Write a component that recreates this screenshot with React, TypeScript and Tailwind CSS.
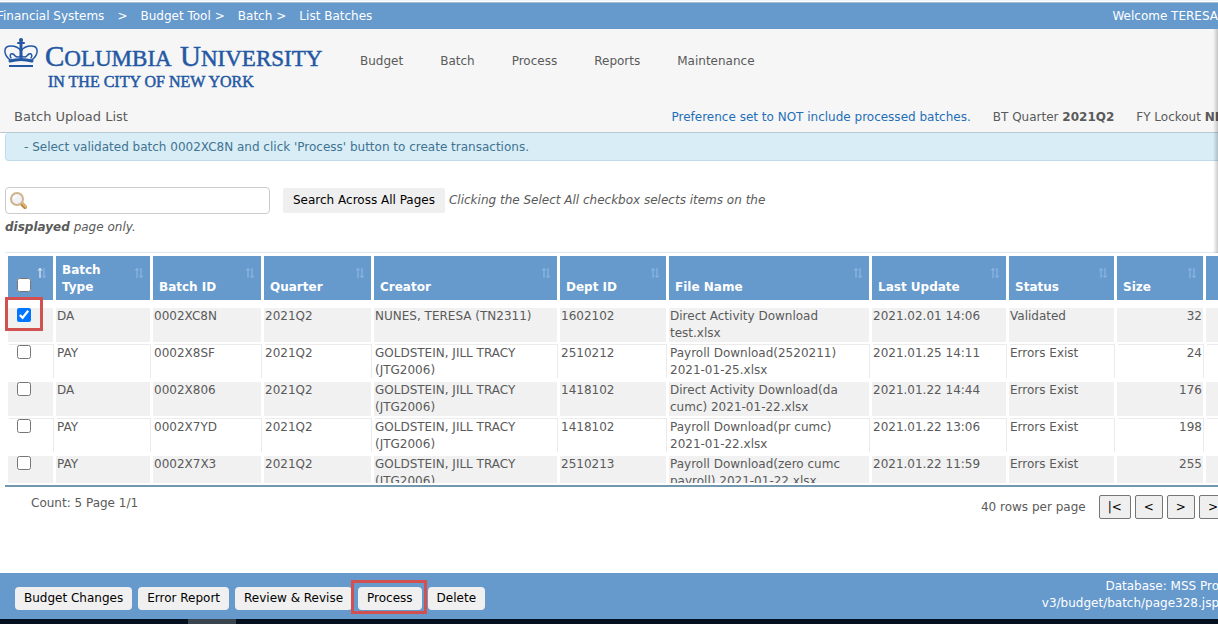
import { useState } from "react";

interface Batch {
  id: string;
  type: string;
  quarter: string;
  creator: string;
  dept: string;
  file: string;
  updated: string;
  status: string;
  size: number;
}

const BATCHES: Batch[] = [
  {
    id: "0002XC8N",
    type: "DA",
    quarter: "2021Q2",
    creator: "NUNES, TERESA (TN2311)",
    dept: "1602102",
    file: "Direct Activity Download test.xlsx",
    updated: "2021.02.01 14:06",
    status: "Validated",
    size: 32,
  },
  {
    id: "0002X8SF",
    type: "PAY",
    quarter: "2021Q2",
    creator: "GOLDSTEIN, JILL TRACY (JTG2006)",
    dept: "2510212",
    file: "Payroll Download(2520211) 2021-01-25.xlsx",
    updated: "2021.01.25 14:11",
    status: "Errors Exist",
    size: 24,
  },
  {
    id: "0002X806",
    type: "DA",
    quarter: "2021Q2",
    creator: "GOLDSTEIN, JILL TRACY (JTG2006)",
    dept: "1418102",
    file: "Direct Activity Download(da cumc) 2021-01-22.xlsx",
    updated: "2021.01.22 14:44",
    status: "Errors Exist",
    size: 176,
  },
  {
    id: "0002X7YD",
    type: "PAY",
    quarter: "2021Q2",
    creator: "GOLDSTEIN, JILL TRACY (JTG2006)",
    dept: "1418102",
    file: "Payroll Download(pr cumc) 2021-01-22.xlsx",
    updated: "2021.01.22 13:06",
    status: "Errors Exist",
    size: 198,
  },
  {
    id: "0002X7X3",
    type: "PAY",
    quarter: "2021Q2",
    creator: "GOLDSTEIN, JILL TRACY (JTG2006)",
    dept: "2510213",
    file: "Payroll Download(zero cumc payroll) 2021-01-22.xlsx",
    updated: "2021.01.22 11:59",
    status: "Errors Exist",
    size: 255,
  },
];

const COLUMNS = [
  { title: "Batch Type", width: "w-[94px]" },
  { title: "Batch ID", width: "w-[108px]" },
  { title: "Quarter", width: "w-[107px]" },
  { title: "Creator", width: "w-[183px]" },
  { title: "Dept ID", width: "w-[106px]" },
  { title: "File Name", width: "w-[200px]" },
  { title: "Last Update", width: "w-[134px]" },
  { title: "Status", width: "w-[105px]" },
  { title: "Size", width: "w-[86px]" },
];

const CRUMBS = ["Financial Systems", "Budget Tool", "Batch", "List Batches"];
const MENU = ["Budget", "Batch", "Process", "Reports", "Maintenance"];
const TH =
  "relative h-[49px] border-b-[5px] border-transparent bg-[#6699cc] bg-clip-padding px-[6px] pt-[6px] pb-[4px] text-left align-bottom font-bold text-white";

function Logo() {
  return (
    <svg width="326" height="54" viewBox="0 0 326 54" role="img" aria-label="Columbia University">
      <g fill="none" stroke="#2458a4" strokeWidth="1.5" strokeLinecap="round" strokeLinejoin="round">
        <path d="M10 23C3 17 3 9 11 9c5 0 8 2 10 5 2-3 5-5 10-5 8 0 8 8 1 14" />
        <path d="M11 21c-2-3 0-5 2-4s2 3 5 3 3-2 3-5c0 3 0 5 3 5s3-2 5-3 4 1 2 4" />
        <path d="M21 3v18" strokeWidth="3" />
        <path d="M18 6h6" strokeWidth="2" />
        <path d="M10 24c7-2 15-2 22 0" strokeWidth="3" />
        <path d="M9 29h24" strokeWidth="2" strokeLinecap="butt" />
      </g>
      <circle cx="21" cy="3" r="2" fill="#2458a4" />
      <g
        fill="#2458a4"
        stroke="#2458a4"
        strokeWidth="0.5"
        fontFamily="'Liberation Serif', serif"
      >
        <text x="45" y="29" fontSize="23">
          <tspan fontSize="29">C</tspan>OLUMBIA
        </text>
        <text x="180" y="29" fontSize="23">
          <tspan fontSize="29">U</tspan>NIVERSITY
        </text>
        <text x="48" y="50" fontSize="16">
          IN THE CITY OF NEW YORK
        </text>
      </g>
    </svg>
  );
}

function SortIcon({ active = false }: { active?: boolean }) {
  return (
    <svg
      className="absolute top-[11px] right-[6px]"
      width="10"
      height="12"
      viewBox="0 0 10 12"
      fill="none"
      stroke="#94bce6"
      aria-hidden="true"
    >
      <path d="M3 11V1.500M1 3.500l2-2 2 2" stroke={active ? "#ffffff" : "#94bce6"} />
      <path d="M7 1v9.500M5 8.500l2 2 2-2" />
    </svg>
  );
}

function SearchIcon() {
  return (
    <svg width="18" height="18" viewBox="0 0 18 18" aria-hidden="true">
      <path d="M12 12l3 3" stroke="#b98a4a" strokeWidth="4" strokeLinecap="round" />
      <path d="M12 11l4 4" stroke="#e9c078" strokeWidth="1.500" strokeLinecap="round" />
      <circle cx="7" cy="7" r="6" fill="#f1f1f7" stroke="#cdb48c" strokeWidth="2" />
      <path d="M4 7a3 3 0 0 1 3-3" fill="none" stroke="#ffffff" strokeWidth="1.500" />
    </svg>
  );
}

function Highlight({ className }: { className: string }) {
  return (
    <span className={`pointer-events-none absolute border-3 border-[#d2504f] ${className}`} />
  );
}

function ActionButton({ label }: { label: string }) {
  return (
    <button type="button" className="h-[23px] rounded bg-[#f0f0f0] px-[9px] text-black">
      {label}
    </button>
  );
}

export default function App() {
  const [selected, setSelected] = useState<string[]>(["0002XC8N"]);
  const [query, setQuery] = useState("");

  function toggle(id: string) {
    setSelected((prev) => (prev.includes(id) ? prev.filter((x) => x !== id) : [...prev, id]));
  }

  function toggleAll() {
    setSelected((prev) => (prev.length === BATCHES.length ? [] : BATCHES.map((b) => b.id)));
  }

  return (
    <div className="relative flex min-h-screen flex-col overflow-hidden bg-white font-['DejaVu_Sans',sans-serif] text-xs leading-[17px] text-[#5a5a5a]">
      <div className="h-[3px] border-t border-b border-t-[#eef4f8] border-b-[#a5bccd] bg-white" />
      <div className="flex h-[26px] items-center justify-between overflow-hidden bg-[#6699cc] whitespace-nowrap text-white">
        <nav className="-ml-[3px] flex" aria-label="Breadcrumb">
          {CRUMBS.map((c, i) => (
            <span key={c} className="flex">
              <a href="#">{c}</a>
              {i < CRUMBS.length - 1 && (
                <span className={i === 0 ? "mx-[13px]" : "mr-[13px] ml-[4px]"}>&gt;</span>
              )}
            </span>
          ))}
        </nav>
        <span>Welcome TERESA</span>
      </div>

      <header className="overflow-hidden border-b border-[#b9c9d3] bg-[#f6f6f6] whitespace-nowrap">
        <div className="flex h-[72px] items-start pt-[8px]">
          <Logo />
          <nav className="mt-[16px] ml-[34px] flex gap-[37px]">
            {MENU.map((m) => (
              <a key={m} href="#">
                {m}
              </a>
            ))}
          </nav>
        </div>
        <div className="flex h-[31px] items-center justify-between pl-[14px]">
          <h1 className="text-[13px]">Batch Upload List</h1>
          <div className="-mr-[5px] flex gap-[22px] pt-[2px]">
            <a href="#" className="text-[#1f6fb8]">
              Preference set to NOT include processed batches.
            </a>
            <span>
              BT Quarter <b>2021Q2</b>
            </span>
            <span>
              FY Lockout <b>NE</b>
            </span>
          </div>
        </div>
      </header>

      <div className="-mr-1 ml-[5px] rounded border border-t-0 border-[#bcdcea] bg-[#d9edf7] px-[18px] pt-[6px] pb-[4px] text-[#3f7390]">
        - Select validated batch 0002XC8N and click 'Process' button to create transactions.
      </div>

      <div className="mt-[26px] ml-[5px] max-w-[800px] leading-[27px]">
        <label className="mr-[13px] inline-flex h-[27px] w-[265px] items-center gap-1 rounded border border-[#cccccc] bg-white px-[4px] align-middle">
          <SearchIcon />
          <input
            type="text"
            aria-label="Search batches"
            className="min-w-0 flex-1 outline-none"
            value={query}
            onChange={(e) => setQuery(e.target.value)}
          />
        </label>
        <button
          type="button"
          className="mr-[4px] h-[25px] rounded-xs bg-[#efefef] px-[10px] align-middle leading-[25px] text-black"
        >
          Search Across All Pages
        </button>
        <i>
          Clicking the Select All checkbox selects items on the <b>displayed</b> page only.
        </i>
      </div>

      <div className="mt-[11px] ml-[5px] h-[235px] overflow-hidden border-t border-b-2 border-t-[#dfe8ef] border-b-[#7398ae]">
        <div className="h-[230px] overflow-hidden">
          <table className="w-full min-w-[1240px] table-fixed border-separate border-spacing-[3px]">
            <thead>
              <tr>
                <th className={`${TH} w-[45px]`}>
                  <input
                    type="checkbox"
                    aria-label="Select all"
                    className="mb-[4px] ml-[3px] block size-[14px]"
                    checked={selected.length === BATCHES.length}
                    onChange={toggleAll}
                  />
                  <SortIcon active />
                </th>
                {COLUMNS.map((c) => (
                  <th key={c.title} className={`${TH} ${c.width}`}>
                    <span className={c.title === "Batch Type" ? "block w-[50px]" : "block"}>
                      {c.title}
                    </span>
                    <SortIcon />
                  </th>
                ))}
                <th className={TH} aria-label="Actions" />
              </tr>
            </thead>
            <tbody>
              {BATCHES.map((b) => (
                <tr
                  key={b.id}
                  className="align-top *:h-[34px] *:px-px odd:*:bg-[#f1f1f1] even:*:shadow-[1px_-1px_0_#ebebeb]"
                >
                  <td className="relative">
                    <input
                      type="checkbox"
                      aria-label={`Select ${b.id}`}
                      className="ml-[8px] block size-[14px]"
                      checked={selected.includes(b.id)}
                      onChange={() => toggle(b.id)}
                    />
                    {b.id === "0002XC8N" && (
                      <Highlight className="-top-[11px] -left-[3px] h-[34px] w-[38px]" />
                    )}
                  </td>
                  <td>{b.type}</td>
                  <td>{b.id}</td>
                  <td>{b.quarter}</td>
                  <td>{b.creator}</td>
                  <td>{b.dept}</td>
                  <td>{b.file}</td>
                  <td>{b.updated}</td>
                  <td>{b.status}</td>
                  <td className="text-right">{b.size}</td>
                  <td />
                </tr>
              ))}
            </tbody>
          </table>
        </div>
      </div>

      <div className="mt-[8px] flex items-start justify-between overflow-hidden pl-[31px] whitespace-nowrap">
        <span>Count: 5 Page 1/1</span>
        <div className="-mr-[13px] flex items-center gap-[4px]">
          <span className="mr-[9px]">40 rows per page</span>
          {["|<", "<", ">", ">|"].map((p) => (
            <button
              key={p}
              type="button"
              className="h-6 rounded-xs border border-[#767676] bg-[#efefef] px-[8px] text-black"
            >
              {p}
            </button>
          ))}
        </div>
      </div>

      <footer className="mt-auto">
        <div className="flex h-[46px] items-center justify-between overflow-hidden bg-[#6699cc] pl-[15px] whitespace-nowrap">
          <div className="flex gap-[6px] pt-[4px]">
            <ActionButton label="Budget Changes" />
            <ActionButton label="Error Report" />
            <ActionButton label="Review &amp; Revise" />
            <span className="relative flex">
              <ActionButton label="Process" />
              <Highlight className="-top-[7px] -right-[5px] -bottom-[4px] -left-[7px]" />
            </span>
            <ActionButton label="Delete" />
          </div>
          <div className="-mr-[1px] pb-[3px] text-right text-white">
            <div>Database: MSS Pro</div>
            <div>v3/budget/batch/page328.jsp</div>
          </div>
        </div>
        <div className="h-[5px] bg-[#04101f] pl-[188px]">
          <div className="h-full w-12 bg-[#3a444e]" />
        </div>
      </footer>

      <div className="pointer-events-none absolute top-[29px] right-0 h-[224px] w-[5px] bg-linear-to-l from-black/20 to-transparent" />
    </div>
  );
}
